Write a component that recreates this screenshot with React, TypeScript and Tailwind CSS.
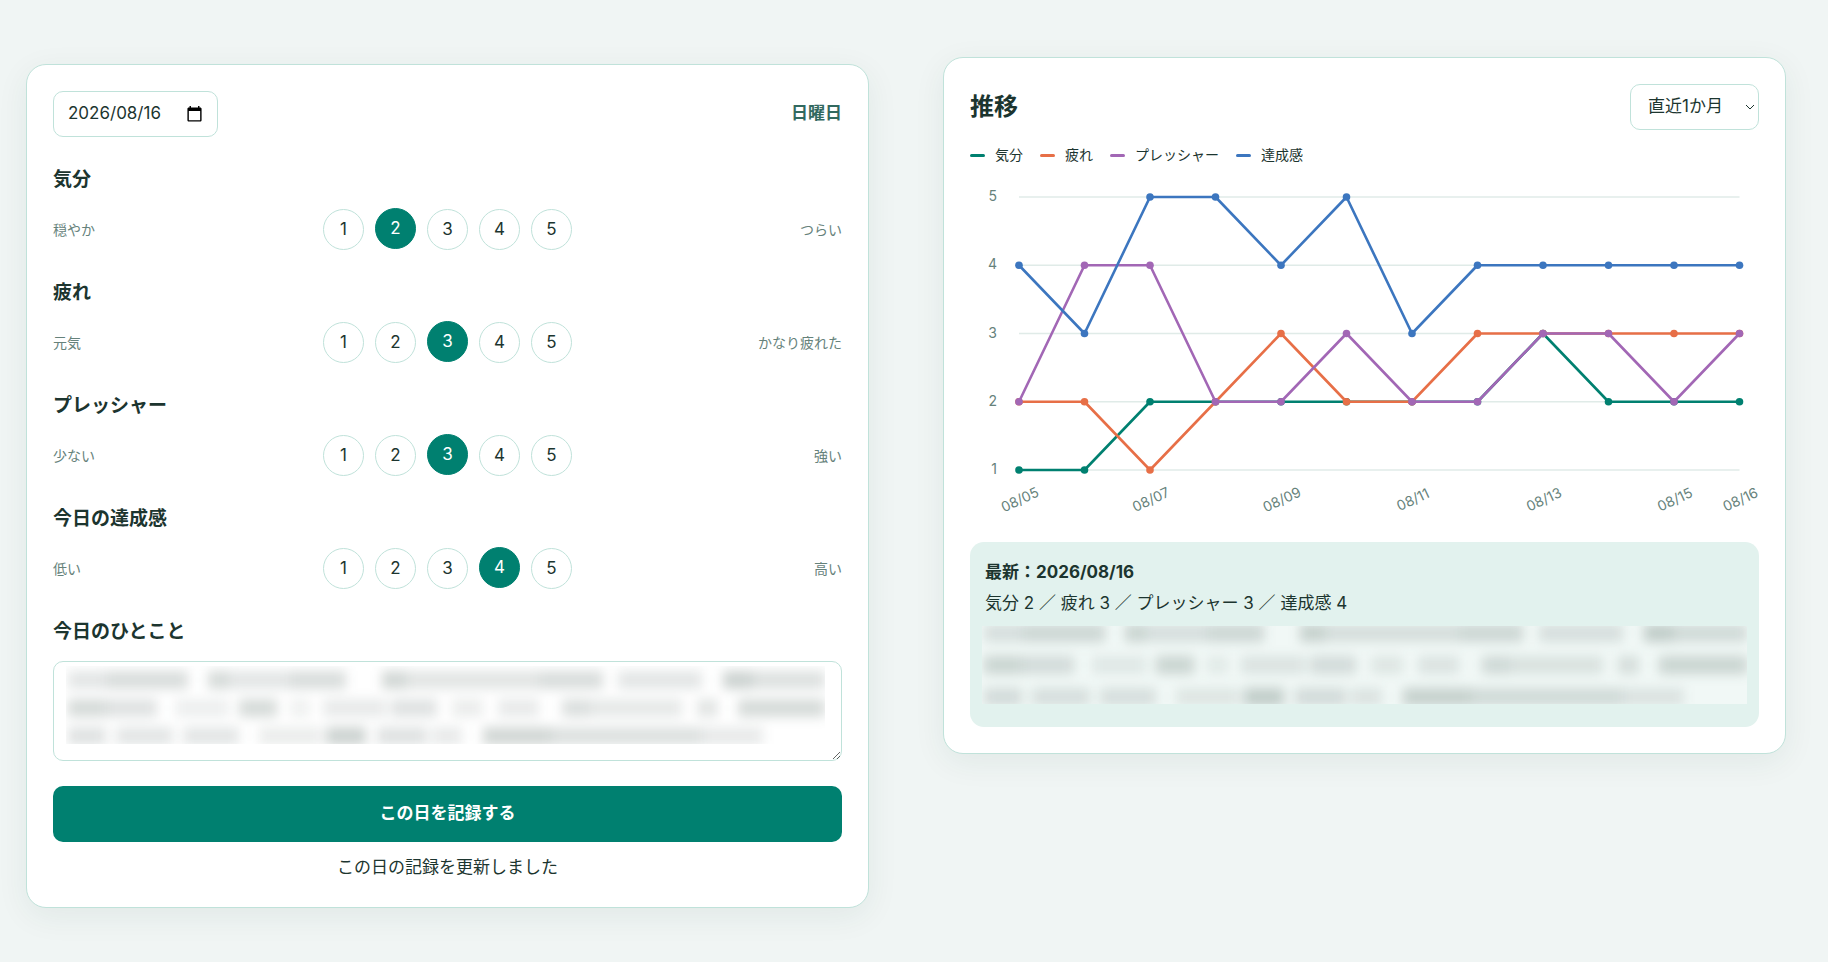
import React, { useState } from 'react';

interface Scale {
    key: string;
    title: string;
    low: string;
    high: string;
}

interface Series {
    name: string;
    color: string;
    values: number[];
}

const SCALES: Scale[] = [
    { key: 'mood', title: '気分', low: '穏やか', high: 'つらい' },
    { key: 'fatigue', title: '疲れ', low: '元気', high: 'かなり疲れた' },
    { key: 'pressure', title: 'プレッシャー', low: '少ない', high: '強い' },
    { key: 'achievement', title: '今日の達成感', low: '低い', high: '高い' },
];

const SERIES: Series[] = [
    { name: '気分', color: '#008070', values: [1, 1, 2, 2, 2, 2, 2, 2, 3, 2, 2, 2] },
    { name: '疲れ', color: '#e76f47', values: [2, 2, 1, 2, 3, 2, 2, 3, 3, 3, 3, 3] },
    { name: 'プレッシャー', color: '#a267b5', values: [2, 4, 4, 2, 2, 3, 2, 2, 3, 3, 2, 3] },
    { name: '達成感', color: '#3c76bf', values: [4, 3, 5, 5, 4, 5, 3, 4, 4, 4, 4, 4] },
];

const DATE_LABELS = [
    { index: 0, text: '08/05' },
    { index: 2, text: '08/07' },
    { index: 4, text: '08/09' },
    { index: 6, text: '08/11' },
    { index: 8, text: '08/13' },
    { index: 10, text: '08/15' },
    { index: 11, text: '08/16' },
];

// Masked phrases as [start, end, opacity] on a line 760 units long
const MASKED_WIDTH = 760;
const MASKED_ROWS: number[][][] = [
    [[2, 40, 0.12], [40, 122, 0.17], [142, 163, 0.18], [163, 224, 0.12], [224, 280, 0.17], [316, 341, 0.2], [341, 474, 0.13], [474, 538, 0.17], [553, 637, 0.12], [658, 688, 0.22], [688, 760, 0.15]],
    [[2, 40, 0.18], [40, 91, 0.14], [109, 163, 0.08], [173, 211, 0.18], [224, 244, 0.07], [257, 321, 0.1], [326, 372, 0.14], [387, 418, 0.09], [433, 474, 0.1], [497, 525, 0.16], [525, 617, 0.11], [632, 653, 0.13], [673, 760, 0.18]],
    [[2, 40, 0.14], [50, 107, 0.12], [117, 173, 0.12], [193, 255, 0.09], [260, 300, 0.22], [311, 362, 0.14], [367, 397, 0.1], [418, 487, 0.2], [487, 637, 0.15], [637, 698, 0.1]],
];

const percent = (units: number) => `${(units / MASKED_WIDTH) * 100}%`;

const pointX = (index: number) => 49 + index * 65.5;
const pointY = (value: number) => 296 - (value - 1) * 68.25;

const MaskedText: React.FC<{ rowClass: string }> = ({ rowClass }) => (
    <div aria-hidden="true" className="blur-[6px]">
        {MASKED_ROWS.map((row, i) => (
            <div key={i} className={`flex items-center ${rowClass}`}>
                {row.map(([start, end, opacity], j) => (
                    <span
                        key={j}
                        className="h-[18px] shrink-0 bg-[#1c352f]"
                        style={{
                            marginLeft: percent(start - (j > 0 ? row[j - 1][1] : 0)),
                            width: percent(end - start),
                            opacity,
                        }}
                    />
                ))}
            </div>
        ))}
    </div>
);

const ScaleRow: React.FC<{ scale: Scale; value: number; onChange: (value: number) => void }> = ({ scale, value, onChange }) => (
    <section className="mt-7">
        <h2 className="text-[19px] leading-[30px] font-bold">{scale.title}</h2>
        <div className="mt-[14px] grid grid-cols-[1fr_auto_1fr] items-center">
            <span className="text-sm text-[#66827b]">{scale.low}</span>
            <div className="flex gap-[11px]">
                {[1, 2, 3, 4, 5].map((n) => (
                    <button
                        key={n}
                        type="button"
                        aria-label={`${scale.title} ${n}`}
                        aria-pressed={n === value}
                        onClick={() => onChange(n)}
                        className={
                            n === value
                                ? 'size-[41px] rounded-full border border-[#008070] bg-[#008070] text-white -translate-y-px'
                                : 'size-[41px] rounded-full border border-[#c0e2da] bg-white'
                        }
                    >
                        {n}
                    </button>
                ))}
            </div>
            <span className="text-right text-sm text-[#66827b]">{scale.high}</span>
        </div>
    </section>
);

const TrendChart: React.FC = () => (
    <svg viewBox="0 0 789 356" className="mt-[7px] block w-full" role="img" aria-label="推移">
        {[1, 2, 3, 4, 5].map((v) => (
            <g key={v}>
                <line x1={pointX(0)} x2={pointX(11)} y1={pointY(v)} y2={pointY(v)} stroke="#e0ebe8" strokeWidth="1.5" />
                <text x="27" y={pointY(v) + 4} textAnchor="end" fontSize="14" fill="#66827b">{v}</text>
            </g>
        ))}
        {SERIES.map((s) => (
            <g key={s.name} fill={s.color}>
                <polyline
                    points={s.values.map((v, i) => `${pointX(i)},${pointY(v)}`).join(' ')}
                    fill="none"
                    stroke={s.color}
                    strokeWidth="2.6"
                    strokeLinejoin="round"
                />
                {s.values.map((v, i) => (
                    <circle key={i} cx={pointX(i)} cy={pointY(v)} r="3.8" />
                ))}
            </g>
        ))}
        {DATE_LABELS.map((label) => (
            <text
                key={label.text}
                textAnchor="middle"
                fontSize="14"
                fill="#66827b"
                transform={`translate(${pointX(label.index) + 3} 330) rotate(-25)`}
            >
                {label.text}
            </text>
        ))}
    </svg>
);

export default function App() {
    const [date, setDate] = useState('2026/08/16');
    const [note, setNote] = useState('');
    const [ratings, setRatings] = useState<Record<string, number>>({
        mood: 2,
        fatigue: 3,
        pressure: 3,
        achievement: 4,
    });

    return (
        <div className="min-h-screen bg-[#f0f5f4] font-[Inter,'Noto_Sans_CJK_JP',sans-serif] text-[17px] text-[#1c352f]">
            <main className="grid grid-cols-2 items-start gap-[74px] pt-[57px] pr-[42px] pb-12 pl-[26px]">
                <form
                    onSubmit={(e) => e.preventDefault()}
                    className="mt-[7px] rounded-[20px] border border-[#c0e2da] bg-white p-[26px] shadow-[0_8px_32px_rgba(28,70,60,0.07)]"
                >
                    <div className="flex items-center justify-between">
                        <div className="flex h-[46px] w-[165px] items-center rounded-[10px] border border-[#c0e2da] px-[14px]">
                            <input
                                type="text"
                                aria-label="日付"
                                value={date}
                                onChange={(e) => setDate(e.target.value)}
                                className="w-full min-w-0 bg-transparent outline-none"
                            />
                            <svg viewBox="0 0 24 24" className="size-[17px] shrink-0" fill="#000" aria-hidden="true">
                                <path d="M20 2h-1V0h-2v2H7V0H5v2H4c-1.1 0-2 .9-2 2v16c0 1.1.9 2 2 2h16c1.1 0 2-.9 2-2V4c0-1.1-.9-2-2-2zm0 18H4V7h16v13z" />
                            </svg>
                        </div>
                        <span className="font-bold text-[#32695f]">日曜日</span>
                    </div>

                    {SCALES.map((scale) => (
                        <ScaleRow
                            key={scale.key}
                            scale={scale}
                            value={ratings[scale.key]}
                            onChange={(value) => setRatings({ ...ratings, [scale.key]: value })}
                        />
                    ))}

                    <label htmlFor="note" className="mt-7 block text-[19px] leading-[30px] font-bold">今日のひとこと</label>
                    <div className="relative mt-[14px]">
                        <textarea
                            id="note"
                            value={note}
                            onChange={(e) => setNote(e.target.value)}
                            className="block h-[100px] w-full resize-y rounded-[10px] border border-[#c0e2da] px-[14px] py-2 outline-none"
                        />
                        <div className="pointer-events-none absolute top-[5px] right-[17px] left-[13px] h-[78px] overflow-hidden">
                            <MaskedText rowClass="h-7" />
                        </div>
                    </div>

                    <button type="submit" className="mt-[25px] block h-14 w-full rounded-[10px] bg-[#008070] font-bold text-white">
                        この日を記録する
                    </button>
                    <p className="mt-[11px] text-center leading-7">この日の記録を更新しました</p>
                </form>

                <section className="rounded-[20px] border border-[#c0e2da] bg-white p-[26px] shadow-[0_8px_32px_rgba(28,70,60,0.07)]">
                    <div className="flex items-center justify-between">
                        <h2 className="text-2xl font-bold">推移</h2>
                        <div className="relative">
                            <select
                                aria-label="期間"
                                className="block h-[46px] w-[129px] appearance-none rounded-[10px] border border-[#c0e2da] bg-white pl-[17px] outline-none"
                            >
                                <option>直近1か月</option>
                            </select>
                            <svg
                                viewBox="0 0 10 6"
                                className="pointer-events-none absolute top-5 right-1 w-[10px]"
                                fill="none"
                                stroke="#1c352f"
                                strokeWidth="1"
                                aria-hidden="true"
                            >
                                <path d="M1 1l4 4 4-4" />
                            </svg>
                        </div>
                    </div>

                    <ul className="mt-[13px] flex gap-[17px] text-sm leading-6">
                        {SERIES.map((s) => (
                            <li key={s.name} className="flex items-center gap-[10px]">
                                <span className="h-[3px] w-[15px] rounded-full" style={{ backgroundColor: s.color }} />
                                {s.name}
                            </li>
                        ))}
                    </ul>

                    <TrendChart />

                    <div className="mt-3 rounded-[14px] bg-[#e2f2ee] px-3 pt-[15px] pb-[23px]">
                        <p className="pl-[3px] leading-[31px] font-bold">最新：2026/08/16</p>
                        <p className="pl-[3px] leading-[31px]">気分 2 ／ 疲れ 3 ／ プレッシャー 3 ／ 達成感 4</p>
                        <div className="mt-[7px] flex h-[78px] flex-col justify-center overflow-hidden bg-[#f1f8f6]">
                            <MaskedText rowClass="h-8" />
                        </div>
                    </div>
                </section>
            </main>
        </div>
    );
}
